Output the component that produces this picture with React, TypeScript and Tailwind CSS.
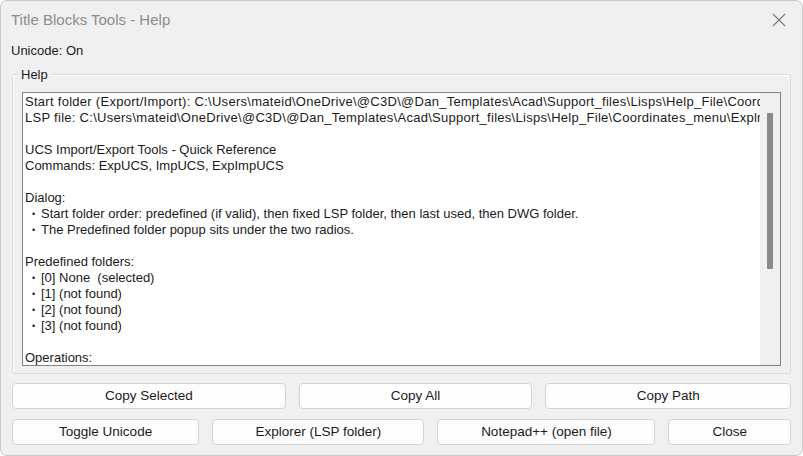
import React from 'react'

const lines: string[] = [
  'Start folder (Export/Import): C:\\Users\\mateid\\OneDrive\\@C3D\\@Dan_Templates\\Acad\\Support_files\\Lisps\\Help_File\\Coordinates_menu',
  'LSP file: C:\\Users\\mateid\\OneDrive\\@C3D\\@Dan_Templates\\Acad\\Support_files\\Lisps\\Help_File\\Coordinates_menu\\ExplmpUCS.lsp',
  '',
  'UCS Import/Export Tools - Quick Reference',
  'Commands: ExpUCS, ImpUCS, ExpImpUCS',
  '',
  'Dialog:',
  '• Start folder order: predefined (if valid), then fixed LSP folder, then last used, then DWG folder.',
  '• The Predefined folder popup sits under the two radios.',
  '',
  'Predefined folders:',
  '• [0] None  (selected)',
  '• [1] (not found)',
  '• [2] (not found)',
  '• [3] (not found)',
  '',
  'Operations:',
]

function Line({ text, path }: { text: string; path?: boolean }) {
  if (text.startsWith('• ')) {
    return (
      <div className="h-[16px] flex whitespace-pre">
        <span className="w-[16px] pl-[7px] text-[9px]">•</span>
        <span>{text.slice(2)}</span>
      </div>
    )
  }
  return (
    <div className={`h-[16px] whitespace-pre ${path ? 'tracking-[0.28px]' : ''}`}>{text}</div>
  )
}

function Btn({ label, w }: { label: string; w: string }) {
  return (
    <button
      className={`${w} h-[26px] bg-[#fdfdfd] border border-[#d3d3d3] rounded-[4px] text-[13.5px] text-[#1b1b1b] flex items-center justify-center`}
    >
      {label}
    </button>
  )
}

export default function App() {
  return (
    <div
      className="w-[803px] h-[456px] bg-[#f0f0f0] border border-[#c9c9c9] rounded-[7px] flex flex-col overflow-hidden text-[#1b1b1b]"
      style={{ fontFamily: '"Liberation Sans", Arial, sans-serif' }}
    >
      {/* Title bar */}
      <div className="h-[38px] shrink-0 flex items-center justify-between pl-[10px] pr-[14px]">
        <span className="text-[15px] text-[#8c8c8c]">Title Blocks Tools - Help</span>
        <svg width="14" height="14" viewBox="0 0 14 14" className="mr-[2px]">
          <path d="M1 1 L13 13 M13 1 L1 13" stroke="#7a7a7a" strokeWidth="1.1" fill="none" />
        </svg>
      </div>

      <div className="pl-[10px] text-[13px] h-[24px] leading-[24px]">Unicode: On</div>

      {/* Group box */}
      <fieldset className="min-w-0 mx-[11px] mt-[4px] border border-[#dcdcdc] rounded-[2px] px-[9px] pb-[7px] shadow-[inset_1px_1px_0_#ffffff]">
        <legend className="ml-[-4px] px-[3px] text-[13px] leading-[15px]">Help</legend>
        <div className="mt-[10px] h-[274px] bg-white border border-[#838383] flex text-[13px] leading-[16px] overflow-hidden">
          <div className="flex-1 min-w-0 overflow-hidden pl-[2px] pt-[1px]">
            {lines.map((l, i) => (
              <Line key={i} text={l} path={i < 2} />
            ))}
          </div>
          <div className="w-[20px] shrink-0 bg-[#f0f0f0] flex justify-center">
            <div className="mt-[20px] w-[6px] h-[156px] bg-[#8a8a8a] rounded-[1px]" />
          </div>
        </div>
      </fieldset>

      {/* Buttons */}
      <div className="mt-[9px] px-[11px] flex gap-[13px]">
        <Btn label="Copy Selected" w="w-[274px]" />
        <Btn label="Copy All" w="w-[234px]" />
        <Btn label="Copy Path" w="w-[246px]" />
      </div>
      <div className="mt-[10px] px-[11px] flex gap-[13px]">
        <Btn label="Toggle Unicode" w="w-[188px]" />
        <Btn label="Explorer (LSP folder)" w="w-[213px]" />
        <Btn label="Notepad++ (open file)" w="w-[219px]" />
        <Btn label="Close" w="w-[123px]" />
      </div>
    </div>
  )
}
